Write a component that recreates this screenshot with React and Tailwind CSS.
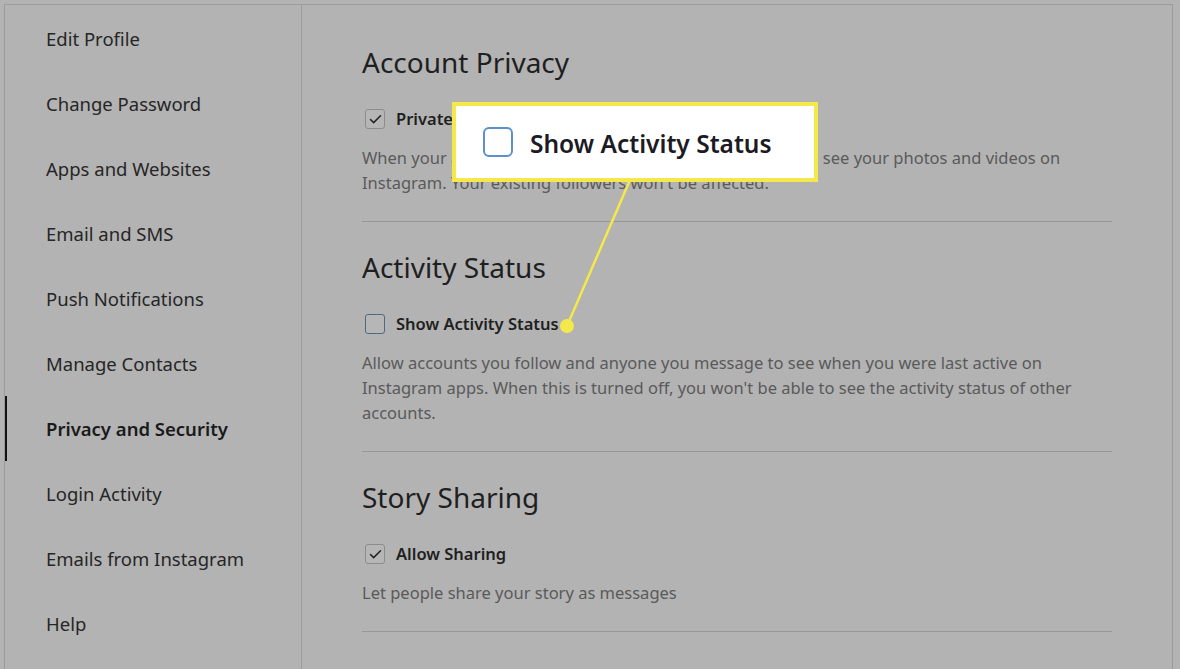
import { Check } from "lucide-react";

const menu = [
  "Edit Profile",
  "Change Password",
  "Apps and Websites",
  "Email and SMS",
  "Push Notifications",
  "Manage Contacts",
  "Privacy and Security",
  "Login Activity",
  "Emails from Instagram",
  "Help",
];

function Box({ checked, blue }) {
  return (
    <span
      className={`flex h-[20px] w-[20px] items-center justify-center rounded-[3px] border ${
        blue ? "border-[#4d6a80]" : "border-[#8c8c8c]"
      } bg-[#b6b6b6]`}
    >
      {checked && <Check size={15} strokeWidth={2.4} className="text-[#222]" />}
    </span>
  );
}

function Section({ title, label, checked, blue, lines, first }) {
  return (
    <section className={`border-b border-[#979797] pb-[26px] ${first ? "" : "pt-[27px]"}`}>
      <h2 className="text-[28px] leading-[36px] text-[#1f1f1f]">{title}</h2>
      <div className="mt-[27px] flex h-[24px] items-center gap-[11px] pl-[3px]">
        <Box checked={checked} blue={blue} />
        <span className="text-[16.5px] font-semibold text-[#1f1f1f]">{label}</span>
      </div>
      <p className="mt-[14px] text-[16.5px] leading-[25px] text-[#5a5a5a]">
        {lines.map((l, i) => (
          <span key={i} className="block whitespace-nowrap">
            {l}
          </span>
        ))}
      </p>
    </section>
  );
}

export default function App() {
  return (
    <div
      className="relative h-[669px] w-[1180px] overflow-hidden bg-[#b3b3b3] pl-[4px] pt-[4px]"
      style={{ fontFamily: '"Noto Sans", "Open Sans", sans-serif' }}
    >
      <div className="flex h-[700px] w-[1169px] border-l border-r border-t border-[#9c9c9c]">
        <nav className="w-[297px] shrink-0 border-r border-[#9c9c9c] pt-[1px]">
          {menu.map((m) => {
            const active = m === "Privacy and Security";
            return (
              <div
                key={m}
                className={`flex h-[65px] items-center text-[18.5px] ${
                  active
                    ? "border-l-2 border-[#111] pl-[39px] font-semibold text-[#1a1a1a]"
                    : "pl-[41px] text-[#262626]"
                }`}
              >
                {m}
              </div>
            );
          })}
        </nav>
        <main className="w-[810px] pl-[60px] pt-[39px]">
          <Section
            first
            title="Account Privacy"
            label="Private Account"
            checked
            lines={[
              "When your account is private, only people you approve can see your photos and videos on",
              "Instagram. Your existing followers won't be affected.",
            ]}
          />
          <Section
            title="Activity Status"
            label="Show Activity Status"
            blue
            lines={[
              "Allow accounts you follow and anyone you message to see when you were last active on",
              "Instagram apps. When this is turned off, you won't be able to see the activity status of other",
              "accounts.",
            ]}
          />
          <Section
            title="Story Sharing"
            label="Allow Sharing"
            checked
            lines={["Let people share your story as messages"]}
          />
          <h2 className="pt-[34px] text-[28px] leading-[36px] text-[#1f1f1f]">Comments</h2>
        </main>
      </div>

      <svg className="pointer-events-none absolute left-0 top-0" width="1180" height="669">
        <line x1="630" y1="180" x2="567" y2="326" stroke="#f5e84a" strokeWidth="2.5" />
        <circle cx="567" cy="326" r="7" fill="#f5e84a" />
      </svg>

      <div className="absolute left-[452px] top-[102px] flex h-[80px] w-[366px] items-center gap-[17px] border-[4px] border-[#f5e84a] bg-white pl-[27px]">
        <span className="h-[30px] w-[30px] rounded-[6px] border-2 border-[#5d8fcc]" />
        <span className="pt-[4px] text-[24.5px] font-semibold text-[#1c1a24]">Show Activity Status</span>
      </div>
    </div>
  );
}
